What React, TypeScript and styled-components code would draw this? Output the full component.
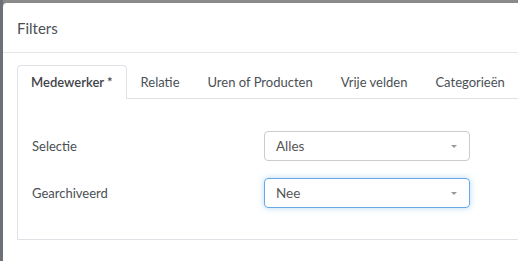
import React from "react";
import styled, { createGlobalStyle } from "styled-components";

const Global = createGlobalStyle`
  html, body { margin: 0; padding: 0; }
  body {
    background: #82868a;
    font-family: Lato, "Noto Sans", sans-serif;
    width: 518px;
    height: 261px;
    overflow: hidden;
  }
`;

const Backdrop = styled.div`
  display: flex;
  height: 261px;
  padding: 3px 0 0 3px;
  box-sizing: border-box;
  background: linear-gradient(to right, #6c7176 0, #6c7176 3px, #8a8a8a 3px);
`;

const Modal = styled.div`
  flex: 1;
  background: #fff;
  border-top-left-radius: 4px;
  display: flex;
  flex-direction: column;
  min-width: 0;
`;

const Header = styled.div`
  height: 49px;
  border-bottom: 1px solid #e5e5e5;
  display: flex;
  align-items: center;
  padding: 0 14px;
  font-size: 15px;
  color: #4a4f55;
`;

const Body = styled.div`
  padding: 12px 0 0 14px;
`;

const Tabs = styled.div`
  display: flex;
  border-bottom: 1px solid #dee2e6;
  height: 33px;
  white-space: nowrap;
`;

const Tab = styled.div<{ $active?: boolean }>`
  padding: 0 13px;
  border: 1px solid ${(p) => (p.$active ? "#dee2e6" : "transparent")};
  border-bottom: ${(p) => (p.$active ? "1px solid #fff" : "none")};
  border-top-left-radius: 4px;
  border-top-right-radius: 4px;
  display: flex;
  align-items: center;
  font-size: 13px;
  color: ${(p) => (p.$active ? "#3f444a" : "#4a4f55")};
  font-weight: ${(p) => (p.$active ? 600 : 400)};
  box-sizing: border-box;
  flex-shrink: 0;
  margin-bottom: ${(p) => (p.$active ? "-1px" : "0")};
  height: ${(p) => (p.$active ? "34px" : "33px")};
  background: #fff;
`;

const Pane = styled.div`
  border: 1px solid #dee2e6;
  border-top: none;
  border-right: none;
  padding: 32px 0 31px 14px;
  display: flex;
  flex-direction: column;
  gap: 17px;
`;

const Row = styled.div`
  display: grid;
  grid-template-columns: 232px 206px;
  align-items: center;
`;

const Label = styled.div`
  font-size: 13px;
  color: #4a4f55;
`;

const Select = styled.div<{ $focus?: boolean }>`
  height: 30px;
  box-sizing: border-box;
  border: 1px solid ${(p) => (p.$focus ? "#66a9e6" : "#cccccc")};
  border-radius: 4px;
  box-shadow: ${(p) => (p.$focus ? "0 0 6px rgba(102,175,233,0.45)" : "none")};
  display: flex;
  align-items: center;
  justify-content: space-between;
  padding: 0 12px 0 11px;
  font-family: Lato, sans-serif;
  font-size: 13.5px;
  color: #555;
`;

const Caret = styled.span`
  width: 0;
  height: 0;
  border-left: 3px solid transparent;
  border-right: 3px solid transparent;
  border-top: 3px solid #999;
`;

export default function App() {
  return (
    <>
      <Global />
      <Backdrop>
        <Modal>
          <Header>Filters</Header>
          <Body>
            <Tabs>
              <Tab $active>Medewerker *</Tab>
              <Tab>Relatie</Tab>
              <Tab>Uren of Producten</Tab>
              <Tab>Vrije velden</Tab>
              <Tab>Categorieën</Tab>
            </Tabs>
            <Pane>
              <Row>
                <Label>Selectie</Label>
                <Select>
                  Alles
                  <Caret />
                </Select>
              </Row>
              <Row>
                <Label>Gearchiveerd</Label>
                <Select $focus>
                  Nee
                  <Caret />
                </Select>
              </Row>
            </Pane>
          </Body>
        </Modal>
      </Backdrop>
    </>
  );
}
